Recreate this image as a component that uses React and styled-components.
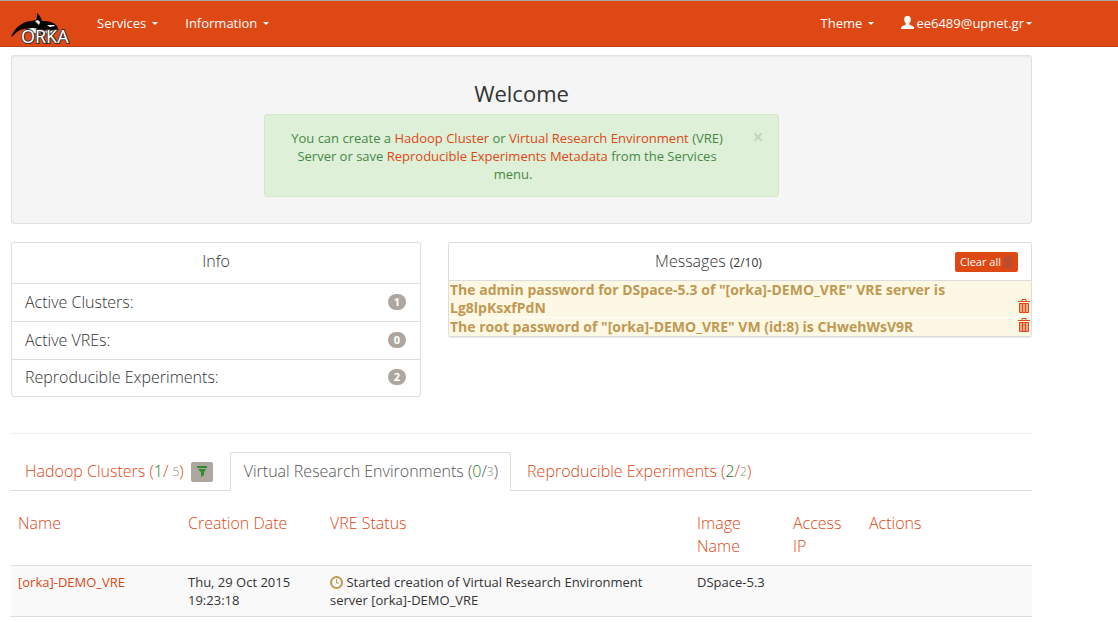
import React from "react";
import styled, { createGlobalStyle } from "styled-components";

const c = {
  brand: "#dd4814",
  brandDark: "#bf3e11",
  text: "#333333",
  muted: "#aea79f",
  green: "#468847",
  line: "#dddddd",
  amber: "#c09853",
};

const GlobalStyle = createGlobalStyle`
  * { box-sizing: border-box; }
  body {
    margin: 0;
    background: #fff;
    color: ${c.text};
    font-family: "Open Sans", "Noto Sans", sans-serif;
    font-size: 13px;
    line-height: 18px;
  }
  button { font-family: inherit; cursor: pointer; }
  a { color: ${c.brand}; text-decoration: none; }
`;

const Navbar = styled.header`
  display: flex;
  align-items: center;
  justify-content: space-between;
  height: 47px;
  padding: 0 86px 0 11px;
  background: ${c.brand};
  border-top: 1px solid ${c.muted};
  border-bottom: 1px solid ${c.brandDark};
`;

const NavGroup = styled.nav`
  display: flex;
  align-items: center;
  gap: 27px;
`;

const Brand = styled.a`
  display: block;
  height: 37px;
  margin-top: 14px;
  svg { display: block; }
`;

const NavButton = styled.button`
  display: flex;
  align-items: center;
  gap: ${(p) => (p.$tight ? "2px" : "6px")};
  padding: 0 0 2px;
  border: 0;
  background: none;
  color: #fff;
  font-size: 13px;
  line-height: 18px;
`;

const Caret = styled.span`
  margin-top: 2px;
  border: 3px solid transparent;
  border-top-color: #fff;
  border-bottom: 0;
`;

const Page = styled.main`
  padding: 8px 86px 0 11px;
`;

const Well = styled.section`
  display: flex;
  flex-direction: column;
  align-items: center;
  padding: 24px 19px 26px;
  border: 1px solid #e1e1e1;
  border-radius: 3px;
  background: #f5f5f5;
  box-shadow: inset 0 1px 1px rgba(0, 0, 0, 0.05);
`;

const Title = styled.h1`
  margin: 0 0 8px;
  font-size: 22px;
  font-weight: 400;
  line-height: 26px;
`;

const Notice = styled.div`
  width: 515px;
  max-width: 100%;
  padding: 14px 30px 13px 13px;
  border: 1px solid #d6e9c6;
  border-radius: 3px;
  background: #dff0d8;
  color: ${c.green};
  text-align: center;
  p { margin: 0; }
`;

const Dismiss = styled.button`
  float: right;
  width: 12px;
  height: 20px;
  margin: 0 -16px 0 16px;
  padding: 0 0 4px;
  border: 0;
  background: none;
  color: #bfd8bd;
  font-size: 19px;
  font-weight: 700;
  line-height: 16px;
`;

const Panels = styled.div`
  display: grid;
  grid-template-columns: 410fr 584fr;
  align-items: start;
  gap: 27px;
  margin-top: 18px;
`;

const Panel = styled.section`
  border: 1px solid ${c.line};
  border-radius: 3px;
  box-shadow: ${(p) => (p.$raised ? "0 1px 1px rgba(0, 0, 0, 0.1)" : "none")};
`;

const PanelHead = styled.header`
  display: flex;
  align-items: ${(p) => (p.$top ? "flex-start" : "center")};
  height: ${(p) => p.$height};
  padding: ${(p) => (p.$top ? "7px" : "0")} 13px 0;
`;

const PanelTitle = styled.h2`
  flex: 1;
  margin: 0;
  font-size: 16px;
  font-weight: 300;
  line-height: 23px;
  text-align: center;
  small { font-size: 12px; font-weight: 400; }
`;

const InfoRow = styled.div`
  display: flex;
  align-items: center;
  justify-content: space-between;
  height: 38px;
  padding: 0 14px 2px 13px;
  border-top: 1px solid ${c.line};
  font-size: 16px;
  font-weight: 300;
  &:last-child { height: 37px; }
`;

const Badge = styled.span`
  width: 18px;
  border-radius: 8px;
  background: ${c.muted};
  color: #fff;
  font-size: 11px;
  font-weight: 700;
  line-height: 16px;
  text-align: center;
`;

const ClearButton = styled.button`
  display: flex;
  align-items: center;
  gap: 2px;
  height: 20px;
  padding: 0 5px;
  border: 0;
  border-radius: 2px;
  background: ${c.brand};
  color: #fff;
  font-size: 11px;
  svg { color: #a8503f; }
`;

const Message = styled.div`
  display: flex;
  align-items: flex-end;
  justify-content: space-between;
  padding: 0 0 0 1px;
  border-top: 1px solid ${(p) => (p.$first ? c.line : "#fff")};
  background: #fcf8e3;
  color: ${c.amber};
  font-size: 14px;
  font-weight: 700;
  p { max-width: 520px; margin: 0; }
`;

const TrashButton = styled.button`
  display: flex;
  padding: 0 1px 4px;
  border: 0;
  background: none;
  color: ${c.brand};
`;

const Rule = styled.hr`
  margin: 36px 0 18px;
  border: 0;
  border-top: 1px solid #eeeeee;
`;

const Tabs = styled.nav`
  display: flex;
  gap: 2px;
  border-bottom: 1px solid ${c.line};
`;

const Tab = styled.a`
  display: flex;
  align-items: center;
  height: 39px;
  margin-bottom: -1px;
  padding: 0 ${(p) => (p.$wide ? "14px" : "12px")} 0 13px;
  border: 1px solid transparent;
  border-radius: 3px 3px 0 0;
  font-size: 16px;
  font-weight: 300;
  line-height: 23px;
  white-space: pre;
  ${(p) => p.$active && `
    color: #555555;
    background: #fff;
    border-color: ${c.line} ${c.line} #fff;
  `}
  b { color: #1f7a24; font-weight: 300; }
  small { color: #8f8880; font-size: 12px; }
`;

const Filter = styled.span`
  display: grid;
  place-items: center;
  width: 22px;
  height: 20px;
  margin-left: 7px;
  border-radius: 2px;
  background: ${c.muted};
`;

const DataTable = styled.table`
  width: 100%;
  margin-top: 14px;
  border-collapse: collapse;
  table-layout: fixed;
  th, td { padding: 7px; text-align: left; vertical-align: top; }
  th { font-size: 16px; font-weight: 300; line-height: 23px; }
  td {
    border-top: 1px solid ${c.line};
    border-bottom: 1px solid ${c.line};
    background: #f9f9f9;
  }
  td svg { vertical-align: -2px; }
`;

const Col = styled.col`
  width: ${(p) => p.$width};
`;

const Logo = () => (
  <svg width="59" height="37" viewBox="0 -1 59 37" role="img" aria-label="Orka logo">
    <path d="M0 24C2 19 6 13 11 11C15 8 20 8 25 7C26 5 26 3 26 0C29 2 30 5 31 8C37 8 43 9 46 13L47 16C45 19 40 18 34 17L20 16C11 15 6 18 3 22Z" fill="#050505" />
    <path d="M24 8L27 7L29 9L28 12L26 10ZM36 12L43 12L44 13L39 14ZM17 16C22 14 25 15 28 17C34 19 41 18 47 16L44 20L22 20Z" fill="#fff" />
    <path d="M31 13C33 15 34 19 32 23C29 20 28 17 28 14Z" fill="#050505" />
    <text x="10" y="30" fontSize="18" fontFamily="Open Sans, sans-serif" fill="#fff" stroke="#333" strokeWidth="2" paintOrder="stroke">ORKA</text>
  </svg>
);

const UserIcon = () => (
  <svg width="13" height="13" viewBox="0 0 13 13" fill="#fff" aria-hidden="true">
    <path d="M6.500 0C9 0 10 1.500 9.800 3.800C9.700 5.500 9 6.500 8.300 7.200V8.500C9.500 9.500 12.500 9.800 13 11.500V13H0V11.500C.5 9.800 3.500 9.500 4.700 8.500V7.200C4 6.500 3.300 5.500 3.200 3.800C3 1.500 4 0 6.500 0Z" />
  </svg>
);

const TrashIcon = ({ size = 14 }) => (
  <svg width={size - 2} height={size} viewBox="0 0 12 14" fill="none" stroke="currentColor" aria-hidden="true">
    <path d="M2 4H10V13H2Z" fill="currentColor" fillOpacity="0.45" stroke="none" />
    <path d="M0 2.500H12M4 2V.5H8V2M1.500 4V13.500H10.500V4.500H1.500M4.500 5V13M7.500 5V13" />
  </svg>
);

const FilterIcon = () => (
  <svg width="10" height="11" viewBox="0 0 10 11" fill="#2f8a34" aria-hidden="true">
    <path d="M0 0H10V2H0ZM1 3H9L7 6V9L4 11V6Z" />
  </svg>
);

const ClockIcon = () => (
  <svg width="13" height="13" viewBox="0 0 13 13" fill="none" stroke={c.amber} aria-hidden="true">
    <circle cx="6.500" cy="6.500" r="5.500" strokeWidth="2" />
    <path d="M6.500 3V7H9" />
  </svg>
);

const stats = [
  ["Active Clusters:", 1],
  ["Active VREs:", 0],
  ["Reproducible Experiments:", 2],
];

const messages = [
  'The admin password for DSpace-5.3 of "[orka]-DEMO_VRE" VRE server is Lg8lpKsxfPdN',
  'The root password of "[orka]-DEMO_VRE" VM (id:8) is CHwehWsV9R',
];

const headings = ["Name", "Creation Date", "VRE Status", "Image Name", "Access IP", "Actions"];
const widths = ["170px", "142px", "auto", "96px", "76px", "170px"];

export default function App() {
  return (
    <>
      <GlobalStyle />
      <Navbar>
        <NavGroup>
          <Brand href="#"><Logo /></Brand>
          <NavButton>Services <Caret /></NavButton>
          <NavButton>Information <Caret /></NavButton>
        </NavGroup>
        <NavGroup>
          <NavButton>Theme <Caret /></NavButton>
          <NavButton $tight><UserIcon />ee6489@upnet.gr<Caret /></NavButton>
        </NavGroup>
      </Navbar>
      <Page>
        <Well>
          <Title>Welcome</Title>
          <Notice>
            <Dismiss aria-label="Close">×</Dismiss>
            <p>
              You can create a <a href="#cluster">Hadoop Cluster</a> or{" "}
              <a href="#vre">Virtual Research Environment</a> (VRE) Server or save{" "}
              <a href="#experiments">Reproducible Experiments Metadata</a> from the Services menu.
            </p>
          </Notice>
        </Well>
        <Panels>
          <Panel>
            <PanelHead $height="40px" $top><PanelTitle>Info</PanelTitle></PanelHead>
            {stats.map(([label, n]) => (
              <InfoRow key={label}>{label}<Badge>{n}</Badge></InfoRow>
            ))}
          </Panel>
          <Panel $raised>
            <PanelHead $height="37px">
              <PanelTitle>Messages <small>(2/10)</small></PanelTitle>
              <ClearButton>Clear all <TrashIcon size={12} /></ClearButton>
            </PanelHead>
            {messages.map((m, i) => (
              <Message key={m} $first={i === 0}>
                <p>{m}</p>
                <TrashButton aria-label="Delete message"><TrashIcon /></TrashButton>
              </Message>
            ))}
          </Panel>
        </Panels>
        <Rule />
        <Tabs>
          <Tab href="#clusters" $wide>
            Hadoop Clusters (<b>1</b>/ <small>5</small>)<Filter><FilterIcon /></Filter>
          </Tab>
          <Tab href="#vres" $active>
            Virtual Research Environments (<b>0</b>/<small>3</small>)
          </Tab>
          <Tab href="#repro">
            Reproducible Experiments (<b>2</b>/<small>2</small>)
          </Tab>
        </Tabs>
        <DataTable>
          <colgroup>{widths.map((w, i) => <Col key={i} $width={w} />)}</colgroup>
          <thead>
            <tr>{headings.map((h) => <th key={h} scope="col"><a href="#sort">{h}</a></th>)}</tr>
          </thead>
          <tbody>
            <tr>
              <td><a href="#demo">[orka]-DEMO_VRE</a></td>
              <td>Thu, 29 Oct 2015 19:23:18</td>
              <td><ClockIcon /> Started creation of Virtual Research Environment server [orka]-DEMO_VRE</td>
              <td>DSpace-5.3</td>
              <td />
              <td />
            </tr>
          </tbody>
        </DataTable>
      </Page>
    </>
  );
}
